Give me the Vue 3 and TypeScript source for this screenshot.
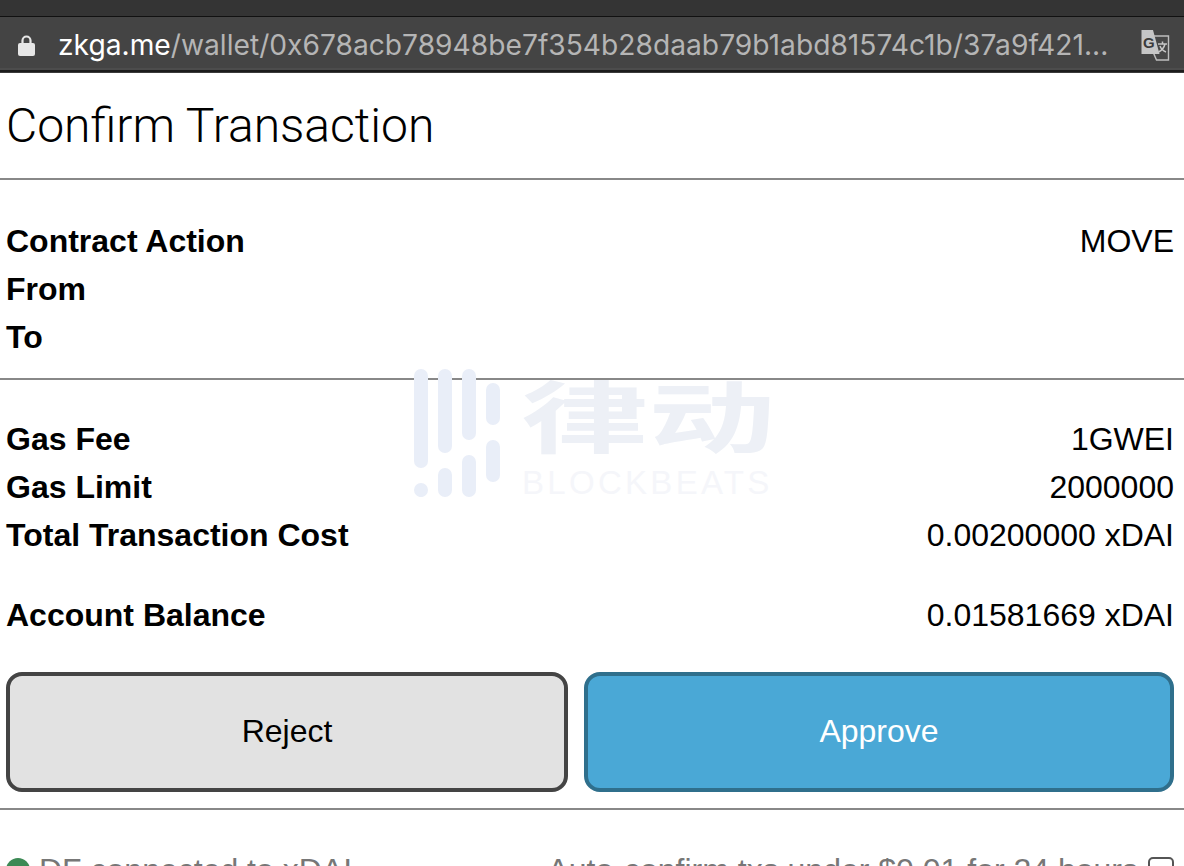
<script setup lang="ts">
interface Row {
  label: string;
  value: string;
}

const contractRows: Row[] = [
  { label: "Contract Action", value: "MOVE" },
  { label: "From", value: "" },
  { label: "To", value: "" },
];

const gasRows: Row[] = [
  { label: "Gas Fee", value: "1GWEI" },
  { label: "Gas Limit", value: "2000000" },
  { label: "Total Transaction Cost", value: "0.00200000 xDAI" },
];

const balance: Row = { label: "Account Balance", value: "0.01581669 xDAI" };
</script>

<template>
  <div class="screen">
    <div class="tab-strip"></div>
    <div class="address-bar">
      <svg class="lock" width="17" height="21" viewBox="0 0 17 21">
        <path d="M4.500 9V5.500a4 4 0 0 1 8 0V9" fill="none" stroke="#e6e6e6" stroke-width="2.200" />
        <rect x="0" y="8" width="17" height="13" rx="2" fill="#e6e6e6" />
      </svg>
      <div class="url"><span class="host">zkga.me</span>/wallet/0x678acb78948be7f354b28daab79b1abd81574c1b/37a9f421...</div>
      <svg class="translate" width="30" height="31" viewBox="0 0 30 31">
        <path d="M12 6h16.500v24h-12l-3-7z" fill="#474747" stroke="#bdbdbd" stroke-width="1.400" />
        <path d="M1.500 0h11.500l6.500 24H1.500z" fill="#c6c6c6" />
        <path d="M18 14h9M22.500 11.500v2.500M25 14c-1 4-3.500 6.500-6.500 8M20 16c1 3 3.500 5 6 6" fill="none" stroke="#c6c6c6" stroke-width="1.500" />
        <text x="3" y="18" class="translate-g">G</text>
      </svg>
    </div>
    <div class="bar-edge"></div>

    <div class="page">
      <h1 class="title">Confirm Transaction</h1>

      <section class="details details-contract">
        <div v-for="row in contractRows" :key="row.label" class="row">
          <span class="label">{{ row.label }}</span>
          <span>{{ row.value }}</span>
        </div>
      </section>

      <section class="details details-gas">
        <div v-for="row in gasRows" :key="row.label" class="row">
          <span class="label">{{ row.label }}</span>
          <span>{{ row.value }}</span>
        </div>
        <div class="row balance">
          <span class="label">{{ balance.label }}</span>
          <span>{{ balance.value }}</span>
        </div>
      </section>

      <div class="actions">
        <button class="btn reject">Reject</button>
        <button class="btn approve">Approve</button>
      </div>

      <div class="footer">
        <div class="status"><i class="dot"></i>DF connected to xDAI</div>
        <div class="auto">Auto-confirm txs under $0.01 for 24 hours<i class="check"></i></div>
      </div>

      <div class="watermark">
        <svg width="86" height="128" viewBox="0 0 86 128">
          <g fill="none" stroke="#e9eef8" stroke-width="14" stroke-linecap="round">
            <path d="M7 7v85" />
            <path d="M31 7v70" />
            <path d="M55 7v57" />
            <path d="M79 21v28" />
            <path d="M79 78v28" />
            <path d="M55 93v28" />
            <path d="M31 106v15" />
            <path d="M7 121v.1" />
          </g>
        </svg>
        <div class="wordmark">
          <span class="cn">律动</span>
          <span class="en">BLOCKBEATS</span>
        </div>
      </div>
    </div>
  </div>
</template>

<style>
html,
body {
  margin: 0;
  background: #fff;
  overflow: hidden;
}
</style>

<style scoped>
.screen {
  width: 1184px;
  height: 866px;
  overflow: hidden;
  font-family: "Liberation Sans", Arial, sans-serif;
  color: #000;
}

.tab-strip {
  height: 16px;
  background: #343434;
  border-bottom: 1px solid #111;
}

.address-bar {
  box-sizing: border-box;
  height: 53px;
  display: flex;
  align-items: center;
  background: #444;
  border-bottom: 2px solid #4c4c4c;
  color: #b5b5b5;
  padding: 5px 0 0 18px;
}

.lock {
  flex: none;
  margin-right: 23px;
}

.url {
  width: 1056px;
  flex: none;
  font-family: Inter, "Liberation Sans", sans-serif;
  font-size: 28.2px;
  white-space: nowrap;
  overflow: hidden;
}

.host {
  color: #fff;
}

.translate {
  flex: none;
  margin-left: 26px;
}

.translate-g {
  font-family: "Liberation Sans", sans-serif;
  font-size: 15px;
  font-weight: 700;
  fill: #3c3c3c;
}

.bar-edge {
  height: 3px;
  background: linear-gradient(#1c1c1c 0 2px, #3a3a3a 2px);
}

.page {
  position: relative;
  height: 793px;
}

.title {
  margin: 0;
  height: 105px;
  border-bottom: 2px solid #888;
  padding-left: 6px;
  font-family: Roboto, "Liberation Sans", sans-serif;
  font-size: 48px;
  font-weight: 300;
  line-height: 106px;
}

.details {
  padding: 0 10px 0 6px;
  font-size: 32px;
  line-height: 48px;
}

.details-contract {
  padding-top: 37px;
  padding-bottom: 17px;
  border-bottom: 2px solid #888;
}

.details-gas {
  padding-top: 35px;
}

.row {
  display: flex;
  justify-content: space-between;
  height: 48px;
}

.label {
  font-weight: 700;
}

.balance {
  margin-top: 32px;
}

.actions {
  display: grid;
  grid-template-columns: 562px 590px;
  gap: 16px;
  padding: 33px 10px 16px 6px;
  border-bottom: 2px solid #888;
}

.btn {
  height: 120px;
  border-radius: 16px;
  border: 4px solid #444;
  font-family: "Liberation Sans", Arial, sans-serif;
  font-size: 32px;
  padding: 0 0 2px;
}

.reject {
  background: #e2e2e2;
  color: #000;
}

.approve {
  background: #4aa8d6;
  border-color: #2f6f8c;
  color: #fff;
}

.footer {
  display: flex;
  justify-content: space-between;
  padding: 40px 10px 0 6px;
  font-size: 32px;
  line-height: 40px;
  color: #777;
}

.status,
.auto {
  display: flex;
  align-items: center;
}

.dot {
  width: 24px;
  height: 24px;
  margin-right: 9px;
  border-radius: 50%;
  background: #3c8a55;
}

.check {
  width: 22px;
  height: 22px;
  margin-left: 10px;
  border: 2px solid #555;
  border-radius: 5px;
}

.watermark {
  position: absolute;
  left: 414px;
  top: 296px;
  display: flex;
  gap: 24px;
  pointer-events: none;
}

.wordmark {
  display: flex;
  flex-direction: column;
  width: 246px;
}

.cn {
  margin: 2px 0 0 -3px;
  font-family: "Noto Sans CJK SC", sans-serif;
  font-size: 78px;
  font-weight: 700;
  line-height: 84px;
  color: #edf0f6;
  transform: scaleX(1.63);
  transform-origin: left center;
  white-space: nowrap;
}

.en {
  margin: 12px 0 0 -2px;
  font-family: "Liberation Sans", sans-serif;
  font-size: 33px;
  line-height: 32px;
  letter-spacing: 3.3px;
  color: #f5f6fa;
  white-space: nowrap;
}
</style>
